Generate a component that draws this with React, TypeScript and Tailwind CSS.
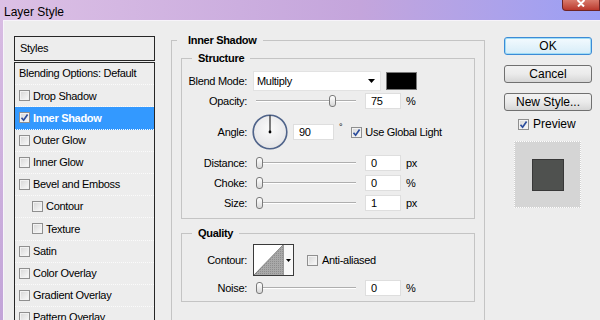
import React from 'react';

function Check({ on = false }: { on?: boolean }) {
  return (
    <span className="flex h-[11px] w-[11px] shrink-0 items-center justify-center border border-[#8f8f8f] bg-gradient-to-br from-[#d6d6d6] to-[#fbfbfb] shadow-[inset_0_0_0_1px_#f2f2f2]">
      {on && (
        <svg viewBox="0 0 9 9" className="h-[9px] w-[9px]">
          <path d="M1.5 4.8 L3.6 7.2 L7.6 1.4" fill="none" stroke="#2b4c9c" strokeWidth="1.7" />
        </svg>
      )}
    </span>
  );
}

function Slider({ pos }: { pos: number }) {
  return (
    <div className="relative h-[14px] w-[100px] shrink-0">
      <div className="absolute left-0 right-0 top-[6px] h-[2px] border-t border-[#aeaeae] bg-white" />
      <div
        className="absolute top-[1px] h-[12px] w-[7px] rounded-[3px] border border-[#7a7a7a] bg-gradient-to-b from-white to-[#d8d8d8]"
        style={{ left: pos }}
      />
    </div>
  );
}

function Field({ value, w = 'w-[36px]' }: { value: string; w?: string }) {
  return (
    <div className={`flex h-[16px] ${w} shrink-0 items-center border border-[#dedede] bg-white pl-[5px]`}>
      {value}
    </div>
  );
}

function Label({ text }: { text: string }) {
  return <div className="w-[65px] shrink-0 text-right">{text}</div>;
}

function SliderRow({ label, pos, value, unit, mt }: { label: string; pos: number; value: string; unit: string; mt: string }) {
  return (
    <div className={`flex h-[16px] items-center ${mt}`}>
      <Label text={label} />
      <div className="ml-[9px]">
        <Slider pos={pos} />
      </div>
      <div className="ml-[9px]">
        <Field value={value} />
      </div>
      <span className="ml-[5px]">{unit}</span>
    </div>
  );
}

const styles: { name: string; check?: boolean; indent?: boolean; on?: boolean; active?: boolean }[] = [
  { name: 'Blending Options: Default', check: false },
  { name: 'Drop Shadow', check: true },
  { name: 'Inner Shadow', check: true, on: true, active: true },
  { name: 'Outer Glow', check: true },
  { name: 'Inner Glow', check: true },
  { name: 'Bevel and Emboss', check: true },
  { name: 'Contour', check: true, indent: true },
  { name: 'Texture', check: true, indent: true },
  { name: 'Satin', check: true },
  { name: 'Color Overlay', check: true },
  { name: 'Gradient Overlay', check: true },
  { name: 'Pattern Overlay', check: true },
];

export default function App() {
  return (
    <div className="h-[320px] w-[600px] overflow-hidden bg-gradient-to-b from-[#d9bde3] to-[#c2a4d8] font-['Liberation_Sans',Arial,sans-serif] text-[11px] tracking-[-0.3px] text-black">
      {/* title bar */}
      <div className="flex h-[20px] items-start justify-between bg-gradient-to-r from-[#dcc0e5] via-[#c4a5dc] via-60% to-[#9a9ff5]">
        <span className="mt-[3px] pl-[4px] text-[12px] tracking-normal text-black">Layer Style</span>
        <div className="flex h-[11px] w-[38px] items-start justify-center rounded-bl-[4px] border border-t-0 border-[#6e2424] bg-gradient-to-b from-[#d97a6c] to-[#b9372c]">
          <svg viewBox="0 0 10 7" className="h-[7px] w-[10px]">
            <path d="M1.5 0 L5 3.5 L8.5 0 M5 3.5 L2 6.5 M5 3.5 L8 6.5" stroke="#fff" strokeWidth="2" fill="none" />
          </svg>
        </div>
      </div>

      {/* dialog body */}
      <div className="ml-[3px] flex h-[300px] items-start border-l border-t border-[#f7f4fa] bg-[#ededed]">
        {/* styles list */}
        <div className="ml-[10px] mt-[15px] w-[141px] shrink-0">
          <div className="flex h-[25px] items-center border border-[#262626] pl-[5px]">Styles</div>
          <div className="mt-[1px] border border-b-0 border-[#262626]">
            {styles.map((s) => (
              <div
                key={s.name}
                className={`flex h-[22.2px] items-center gap-[3px] border-b border-dotted border-[#fbfbfb] ${
                  s.indent ? 'pl-[17px]' : 'pl-[4px]'
                } ${s.active ? 'bg-[#3399ff] font-bold text-white' : ''}`}
              >
                {s.check && <Check on={s.on} />}
                <span>{s.name}</span>
              </div>
            ))}
          </div>
        </div>

        {/* inner shadow group */}
        <fieldset className="ml-[16px] mt-[13px] h-[300px] w-[314px] shrink-0 border border-[#c4c4c4] px-[9px]">
          <legend className="ml-[-4px] pl-[11px] pr-[6px] font-bold leading-[13px]">Inner Shadow</legend>

          <fieldset className="mt-[5px] w-[294px] border border-[#c4c4c4]">
            <legend className="ml-[10px] px-[6px] font-bold leading-[13px]">Structure</legend>
            <div className="flex flex-col pb-[7px]">
              <div className="mt-[6px] flex h-[20px] items-center">
                <Label text="Blend Mode:" />
                <div className="ml-[6px] flex h-[20px] w-[128px] items-center justify-between border border-[#e2e2e2] bg-white pl-[3px] pr-[5px]">
                  <span>Multiply</span>
                  <svg viewBox="0 0 7 4" className="h-[4px] w-[7px]">
                    <path d="M0 0 H7 L3.5 4 Z" fill="#000" />
                  </svg>
                </div>
                <div className="ml-[5px] h-[18px] w-[31px] border border-[#7a7a7a] bg-black" />
              </div>

              <SliderRow label="Opacity:" pos={73} value="75" unit="%" mt="mt-[2px]" />

              <div className="mt-[5px] flex h-[36px] items-center">
                <Label text="Angle:" />
                <svg viewBox="0 0 36 36" className="ml-[5px] h-[36px] w-[36px] shrink-0">
                  <defs>
                    <radialGradient id="dial" cx="50%" cy="40%" r="60%">
                      <stop offset="0%" stopColor="#fbfbfb" />
                      <stop offset="100%" stopColor="#e4e4e6" />
                    </radialGradient>
                  </defs>
                  <circle cx="18" cy="18" r="16.8" fill="url(#dial)" stroke="#50648a" strokeWidth="1.6" />
                  <line x1="18" y1="18" x2="18" y2="1.5" stroke="#000" strokeWidth="1" />
                  <circle cx="18" cy="18" r="1.4" fill="#000" />
                </svg>
                <div className="ml-[5px]">
                  <Field value="90" w="w-[41px]" />
                </div>
                <span className="ml-[5px] self-start pt-[9px] text-[9px] leading-none">°</span>
                <div className="ml-[9px]">
                  <Check on />
                </div>
                <span className="ml-[3px]">Use Global Light</span>
              </div>

              <SliderRow label="Distance:" pos={0} value="0" unit="px" mt="mt-[5px]" />
              <SliderRow label="Choke:" pos={0} value="0" unit="%" mt="mt-[4px]" />
              <SliderRow label="Size:" pos={0} value="1" unit="px" mt="mt-[4px]" />
            </div>
          </fieldset>

          <fieldset className="mt-[8px] w-[294px] border border-[#c4c4c4]">
            <legend className="ml-[10px] px-[6px] font-bold leading-[13px]">Quality</legend>
            <div className="flex flex-col pb-[5px]">
              <div className="mt-[4px] flex h-[32px] items-center">
                <Label text="Contour:" />
                <div className="ml-[6px] flex h-[32px] w-[41px] shrink-0 border border-[#3a3a3a] bg-white">
                  <svg viewBox="0 0 29 30" className="h-[30px] w-[29px]">
                    <defs>
                      <pattern id="hatch" width="2" height="2" patternUnits="userSpaceOnUse">
                        <rect width="2" height="2" fill="#a9a9a9" />
                        <rect width="1" height="1" fill="#8e8e8e" />
                      </pattern>
                    </defs>
                    <polygon points="0,30 29,0 29,30" fill="url(#hatch)" />
                    <line x1="0" y1="30" x2="29" y2="0" stroke="#6e6e6e" strokeWidth="0.8" />
                  </svg>
                  <div className="flex w-[10px] items-center justify-center border-l border-[#9a9a9a] bg-[#f8f8f8]">
                    <svg viewBox="0 0 5 3" className="h-[3px] w-[5px]">
                      <path d="M0 0 H5 L2.5 3 Z" fill="#000" />
                    </svg>
                  </div>
                </div>
                <div className="ml-[13px]">
                  <Check />
                </div>
                <span className="ml-[4px]">Anti-aliased</span>
              </div>
              <SliderRow label="Noise:" pos={0} value="0" unit="%" mt="mt-[4px]" />
            </div>
          </fieldset>
        </fieldset>

        {/* buttons */}
        <div className="ml-[19px] mt-[16px] flex w-[88px] shrink-0 flex-col text-[12px] tracking-normal">
          <button className="h-[18px] rounded-[3px] border border-[#3c8bd6] bg-gradient-to-b from-[#f3fafe] to-[#d6ecf8] leading-none shadow-[inset_0_0_0_1px_#9fdcf6]">
            OK
          </button>
          <button className="mt-[10px] h-[18px] rounded-[3px] border border-[#707070] bg-gradient-to-b from-[#f2f2f2] via-[#ebebeb] to-[#d6d6d6] leading-none">
            Cancel
          </button>
          <button className="mt-[10px] h-[18px] rounded-[3px] border border-[#707070] bg-gradient-to-b from-[#f2f2f2] via-[#ebebeb] to-[#d6d6d6] leading-none">
            New Style...
          </button>
          <div className="mt-[6px] flex h-[14px] items-center pl-[14px]">
            <Check on />
            <span className="ml-[4px]">Preview</span>
          </div>
          <div className="ml-[10px] mt-[10px] flex h-[67px] w-[67px] items-center justify-center border border-dotted border-white bg-[#d5d5d5]">
            <div className="h-[32px] w-[32px] border border-[#383838] bg-[#4f514f]" />
          </div>
        </div>
      </div>
    </div>
  );
}
